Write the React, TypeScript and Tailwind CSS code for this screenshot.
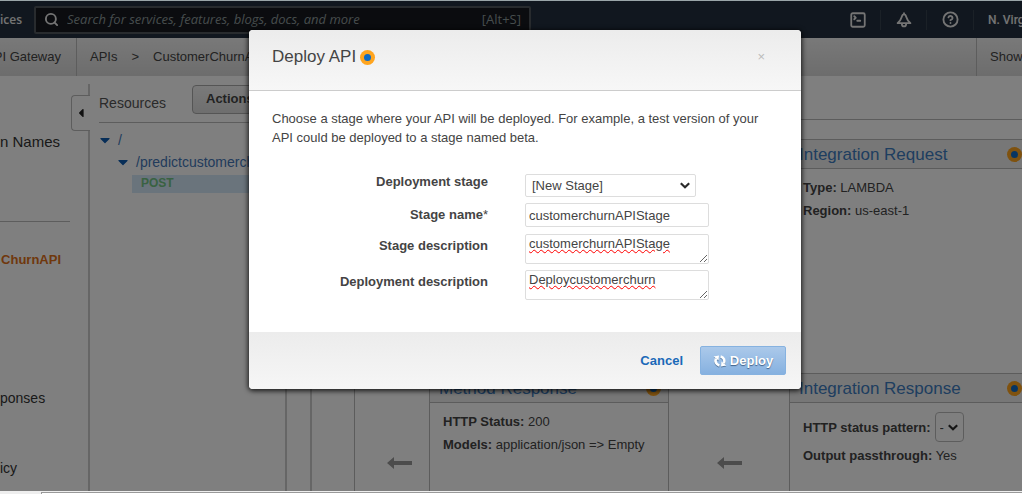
import type { ReactNode } from "react"
import { CircleHelp, Search, SquareTerminal } from "lucide-react"
import { FaCaretDown, FaCaretLeft } from "react-icons/fa"

function BellIcon() {
  return (
    <svg viewBox="0 0 16 16" className="h-4 w-4" fill="none" stroke="currentColor" strokeWidth="1.8" strokeLinejoin="round" aria-hidden="true">
      <path d="M8 2.4C6.8 2.4 6.1 3.4 5.6 5.2C5 7.4 3.8 9.2 1.6 11.2H14.4C12.2 9.2 11 7.4 10.4 5.2C9.9 3.4 9.2 2.4 8 2.4Z" />
      <path d="M8 .6V2.4M5.8 11.4C5.8 15.4 10.2 15.4 10.2 11.4" />
    </svg>
  )
}

function SyncIcon() {
  return (
    <svg viewBox="0 0 14 14" className="h-3.5 w-3.5 drop-shadow-[0_1px_0_#56789e]" aria-hidden="true">
      <g fill="none" stroke="#fff" strokeWidth="2.6">
        <path d="M3 4.6C1.8 7.2 3 10.6 6.4 11.4" />
        <path d="M11 9.4C12.2 6.8 11 3.4 7.6 2.6" />
      </g>
      <path d="M.6 2.4L6 1.6L5.6 6.6ZM13.4 11.6L8 12.4L8.4 7.4Z" fill="#fff" />
    </svg>
  )
}

function ArrowLeft() {
  return (
    <svg viewBox="0 0 25 12" className="h-3 w-[25px] shrink-0" fill="#999" aria-hidden="true">
      <path d="M0 6L7 0V4H25V8H7V12Z" />
    </svg>
  )
}

function Chevron() {
  return (
    <svg
      viewBox="0 0 10 7"
      className="pointer-events-none absolute right-[6px] h-[7px] w-2.5"
      fill="none"
      stroke="#2b2b2b"
      strokeWidth="2.2"
      aria-hidden="true"
    >
      <path d="M.8 1.2L5 5.2L9.2 1.2" />
    </svg>
  )
}

function Dot() {
  return (
    <span className="flex h-[15px] w-[15px] shrink-0 items-center justify-center rounded-full bg-[#ffa51f]">
      <span className="h-[7px] w-[7px] rounded-full bg-[#0f6bc4]" />
    </span>
  )
}

function TopNav() {
  return (
    <header className="flex h-[37px] items-center overflow-hidden bg-[#232f3e] font-['Open_Sans',sans-serif] text-[13px] text-[#e8e8e8]">
      <a href="#services" className="w-[34px] shrink-0 text-xs font-semibold">
        ices
      </a>
      <label className="flex h-7 w-[497px] shrink-0 items-center gap-2 rounded-xs border-2 border-[#50565c] bg-[#16191f] px-2">
        <Search className="h-[15px] w-[15px]" strokeWidth={3} />
        <input
          type="search"
          aria-label="Search"
          placeholder="Search for services, features, blogs, docs, and more"
          className="min-w-0 flex-1 outline-none placeholder:italic placeholder:text-[#8d9a9a]"
        />
        <span className="text-[#8d9a9a]">[Alt+S]</span>
      </label>
      <div className="ml-auto flex h-5 shrink-0 items-center">
        <button aria-label="CloudShell" className="flex w-[45px] justify-center">
          <SquareTerminal className="h-[18px] w-[18px]" strokeWidth={2.4} />
        </button>
        <button aria-label="Notifications" className="flex h-5 w-[47px] items-center justify-center border-x border-[#37424f]">
          <BellIcon />
        </button>
        <button aria-label="Help" className="flex h-5 w-[47px] items-center justify-center border-r border-[#37424f]">
          <CircleHelp className="h-[17px] w-[17px]" strokeWidth={2.6} />
        </button>
        <a href="#region" className="w-[48px] pl-[14px] font-['Roboto',sans-serif] text-xs font-medium whitespace-nowrap">
          N. Virg
        </a>
      </div>
    </header>
  )
}

function Breadcrumbs() {
  return (
    <nav className="flex h-[38px] items-center bg-linear-to-b from-[#f2f2f2] to-[#dadada] text-[13px] whitespace-nowrap text-[#444]">
      <a href="#gateway" className="flex h-full w-[77px] items-center justify-end border-r border-[#bbb] pr-[15px]">
        API Gateway
      </a>
      <div className="flex items-center gap-[14px] pl-[13px]">
        <a href="#apis">APIs</a>
        <span>&gt;</span>
        <a href="#api">CustomerChurnAPI</a>
      </div>
      <a href="#hints" className="ml-auto flex h-full w-[46px] items-center border-l border-[#bbb] pl-[13px]">
        Show
      </a>
    </nav>
  )
}

function Sidebar() {
  return (
    <aside className="flex w-[90px] shrink-0 pt-2">
      <div className="w-[70px] shrink-0 whitespace-nowrap text-[#333]">
        <a href="#domains" className="mt-12 block text-[15px] leading-5">n Names</a>
        <hr className="mt-[69px] border-[#bbb]" />
        <a href="#churn" className="mt-7 flex w-[61px] justify-end text-[13px] leading-5 font-bold text-[#e07018]">
          ChurnAPI
        </a>
        <a href="#responses" className="mt-[118px] block text-sm leading-5">ponses</a>
        <a href="#policy" className="mt-[50px] block text-sm leading-5">icy</a>
      </div>
      <div className="flex flex-1 flex-col pl-px">
        <div className="h-[11px] border-r-2 border-[#ccc]" />
        <button aria-label="Collapse" className="flex h-9 items-center rounded-l border-y border-l border-[#bbb] pl-[3px] text-[#222]">
          <FaCaretLeft className="h-3.5 w-3" />
        </button>
        <div className="flex-1 border-r-2 border-[#ccc]" />
      </div>
    </aside>
  )
}

function Resources() {
  return (
    <section className="w-[197px] shrink-0 overflow-hidden border-r-2 border-[#ccc] pt-[9px] pl-[9px] text-sm text-[#4477b8]">
      <div className="flex h-[38px] items-start border-b border-[#bbb]">
        <h2 className="w-[93px] leading-9 text-[#555]">Resources</h2>
        <button className="h-[29px] flex-1 rounded-l border border-[#aaa] bg-linear-to-b from-[#f4f4f4] to-[#ddd] pl-[13px] text-left text-[13px] font-bold text-[#444]">
          Actions
        </button>
      </div>
      <ul className="pt-[6px] leading-[22px]">
        <li className="flex items-center gap-[7px]">
          <FaCaretDown className="h-4 w-3 text-[#0f5cb0]" />/
        </li>
        <li className="flex items-center gap-[7px] pl-[18px]">
          <FaCaretDown className="h-4 w-3 text-[#0f5cb0]" />
          /predictcustomerch
        </li>
        <li className="mt-0.5 ml-[33px] h-[18px] bg-[#d5e8f8] pl-[9px] text-xs leading-4 font-bold text-[#72c484]">POST</li>
      </ul>
    </section>
  )
}

function Panel({ title, className, children }: { title: string; className: string; children: ReactNode }) {
  return (
    <section className={`flex flex-col border border-b-0 border-[#b8b8b8] text-[13px] text-[#444] ${className}`}>
      <div className="flex h-[29px] items-center justify-between border-b border-[#b8b8b8] bg-[#eee] pr-[7px] pl-[9px]">
        <a href="#panel" className="pt-px text-[17px] text-[#3d7cc0]">{title}</a>
        <Dot />
      </div>
      <div className="flex-1 pt-[7px] pl-[13px] leading-[23px]">{children}</div>
    </section>
  )
}

function Flow() {
  return (
    <main className="mt-[43px] flex min-w-0 flex-1 flex-col overflow-hidden border-t border-l border-[#b8b8b8]">
      <div className="mt-[19px] flex pl-[434px]">
        <Panel title="Integration Request" className="-mr-2 h-[188px] flex-1 border-b">
          <p><b>Type:</b> LAMBDA</p>
          <p><b>Region:</b> us-east-1</p>
        </Panel>
      </div>
      <div className="mt-[46px] flex flex-1">
        <div className="flex w-[74px] shrink-0 justify-end pt-[84px] pr-[17px]">
          <ArrowLeft />
        </div>
        <Panel title="Method Response" className="w-60 shrink-0">
          <p><b>HTTP Status:</b> 200</p>
          <p><b>Models:</b> application/json =&gt; Empty</p>
        </Panel>
        <div className="flex w-[120px] shrink-0 justify-center pt-[84px]">
          <ArrowLeft />
        </div>
        <Panel title="Integration Response" className="-mr-2 flex-1">
          <label className="flex h-[34px] items-center gap-1">
            <b>HTTP status pattern:</b>
            <span className="relative flex items-center">
              <select className="h-[30px] w-[29px] appearance-none rounded border border-[#bbb] pl-1">
                <option>-</option>
              </select>
              <Chevron />
            </span>
          </label>
          <p><b>Output passthrough:</b> Yes</p>
        </Panel>
      </div>
    </main>
  )
}

const labelClass = "w-[216px] shrink-0 text-right font-bold leading-4"
const areaClass =
  "h-[30px] w-[184px] resize rounded-xs border border-[#ddd] px-[3px] pt-px leading-4 underline decoration-[#f00] decoration-wavy decoration-1 underline-offset-1 outline-none"

function DeployDialog() {
  return (
    <form
      role="dialog"
      aria-labelledby="deploy-title"
      className="h-fit w-[552px] overflow-hidden rounded bg-white text-[13px] text-[#444] shadow-[0_1px_5px_1px_rgba(0,0,0,0.8)]"
      onSubmit={(e) => e.preventDefault()}
    >
      <div className="flex h-[61px] items-center border-b border-[#ccc] bg-linear-to-b from-[#ececec] to-[#f7f7f7] pr-9 pb-[6px] pl-[23px]">
        <h1 id="deploy-title" className="mr-1 text-[17px]">Deploy API</h1>
        <Dot />
        <button type="button" aria-label="Close" className="ml-auto text-[#bbb]">×</button>
      </div>
      <div className="h-[241px] pt-[18px] pr-6 pl-[23px]">
        <p className="leading-[19px]">
          Choose a stage where your API will be deployed. For example, a test version of your API could be deployed to a
          stage named beta.
        </p>
        <div className="mt-[27px] flex flex-col gap-[6px]">
          <div className="flex gap-[37px]">
            <label htmlFor="stage" className={labelClass}>Deployment stage</label>
            <span className="relative flex items-center">
              <select id="stage" className="h-[23px] w-[171px] appearance-none rounded-xs border border-[#ddd] pl-[6px]">
                <option>[New Stage]</option>
              </select>
              <Chevron />
            </span>
          </div>
          <div className="flex items-center gap-[37px]">
            <label htmlFor="name" className={labelClass}>
              Stage name<span className="font-normal">*</span>
            </label>
            <input id="name" defaultValue="customerchurnAPIStage" className="h-6 w-[184px] rounded-xs border border-[#ddd] px-[3px] outline-none" />
          </div>
          <div className="flex gap-[37px] pt-px">
            <label htmlFor="stage-desc" className={`${labelClass} pt-1`}>Stage description</label>
            <textarea id="stage-desc" spellCheck={false} defaultValue="customerchurnAPIStage" className={areaClass} />
          </div>
          <div className="flex gap-[37px]">
            <label htmlFor="deploy-desc" className={`${labelClass} pt-1`}>Deployment description</label>
            <textarea id="deploy-desc" spellCheck={false} defaultValue="Deploycustomerchurn" className={areaClass} />
          </div>
        </div>
      </div>
      <div className="flex h-[57px] items-center justify-end gap-[17px] bg-linear-to-b from-[#ececec] to-[#f6f6f6] pr-[15px] font-bold">
        <button type="button" className="text-[#1a69b8]">Cancel</button>
        <button className="flex h-[29px] w-[86px] items-center justify-center gap-[3px] rounded-xs border border-[#86b2e0] bg-linear-to-b from-[#abc9ea] to-[#86b1e0] text-white [text-shadow:0_1px_1px_#3d5f88]">
          <SyncIcon />
          Deploy
        </button>
      </div>
    </form>
  )
}

export default function App() {
  return (
    <div className="flex min-h-screen flex-col overflow-hidden border-t border-[#9aa5a8] bg-white font-['Liberation_Sans',Arial,sans-serif]">
      <div className="relative flex flex-1 flex-col overflow-hidden">
        <TopNav />
        <Breadcrumbs />
        <div className="flex flex-1">
          <Sidebar />
          <Resources />
          <div className="w-[25px] shrink-0 border-r-2 border-[#ccc]" />
          <div className="w-[42px] shrink-0" />
          <Flow />
        </div>
        <div className="absolute inset-0 flex justify-center bg-black/50 pt-[29px] pl-7">
          <DeployDialog />
        </div>
      </div>
      <div className="flex h-[3px] bg-[#eee] pt-px">
        <div className="ml-[41px] flex-1 border-t border-l border-[#999] bg-white" />
      </div>
    </div>
  )
}
